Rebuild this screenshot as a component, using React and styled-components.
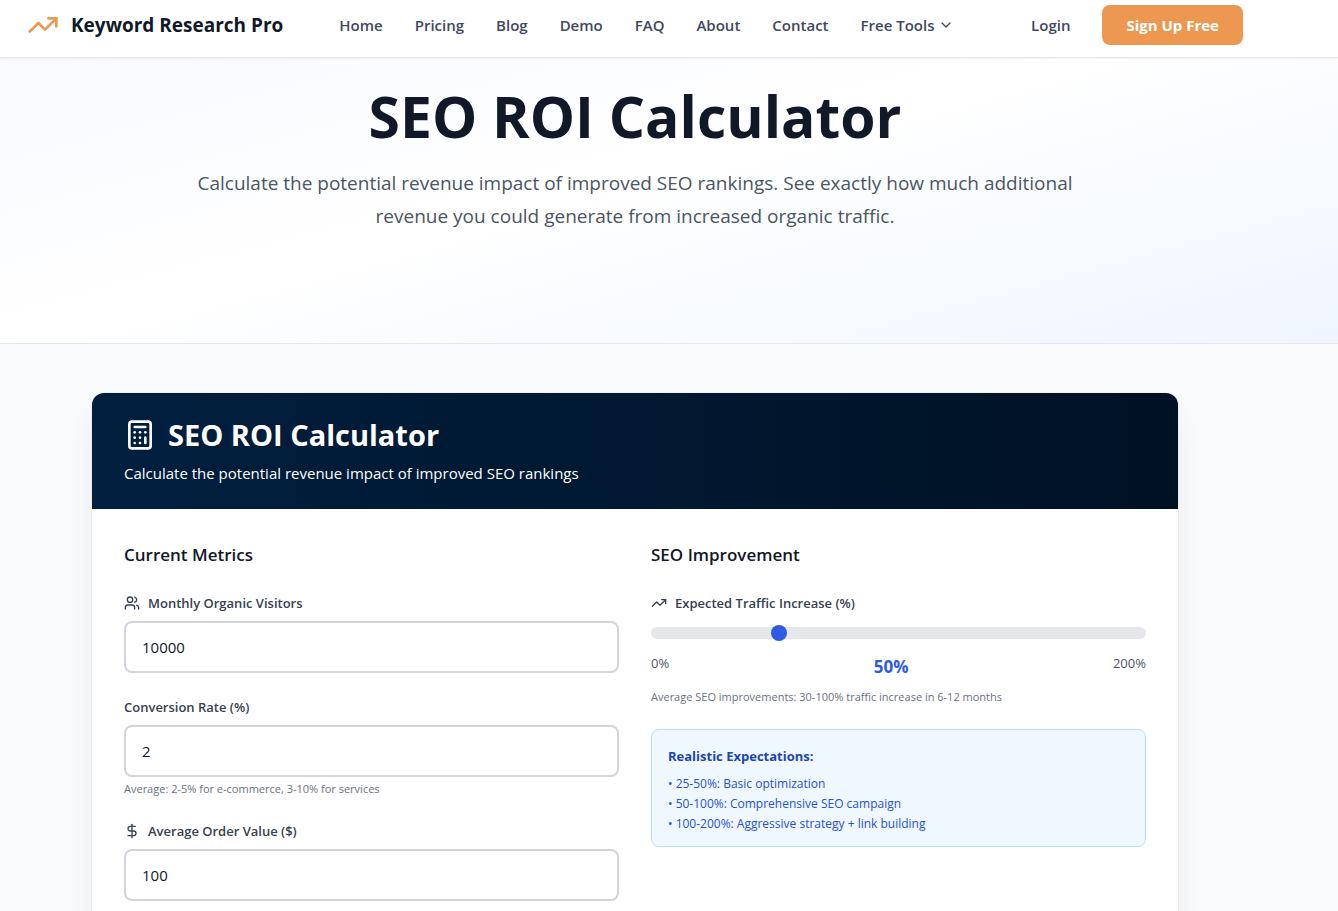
import React, { useState } from "react";
import styled, { createGlobalStyle } from "styled-components";
import {
    Calculator,
    ChevronDown,
    DollarSign,
    TrendingUp,
    Users,
} from "lucide-react";

const navLinks = ["Home", "Pricing", "Blog", "Demo", "FAQ", "About", "Contact"];

const App = () => {
    const [visitors, setVisitors] = useState("10000");
    const [rate, setRate] = useState("2");
    const [orderValue, setOrderValue] = useState("100");
    const [increase, setIncrease] = useState(50);

    return (
        <>
            <GlobalStyle />
            <Header>
                <Brand href="#home">
                    <TrendingUp size={32} color="#ed9850" />
                    Keyword Research Pro
                </Brand>
                <Nav>
                    {navLinks.map((name) => (
                        <NavLink key={name} href={`#${name.toLowerCase()}`}>
                            {name}
                        </NavLink>
                    ))}
                    <MenuButton type="button">
                        Free Tools
                        <ChevronDown size={16} />
                    </MenuButton>
                </Nav>
                <Account>
                    <NavLink href="#login">Login</NavLink>
                    <SignUp type="button">Sign Up Free</SignUp>
                </Account>
            </Header>
            <Hero>
                <HeroTitle>SEO ROI Calculator</HeroTitle>
                <HeroText>
                    Calculate the potential revenue impact of improved SEO
                    rankings. See exactly how much additional revenue you could
                    generate from increased organic traffic.
                </HeroText>
            </Hero>
            <Main>
                <Card>
                    <CardHeader>
                        <CardTitle>
                            <Calculator size={32} />
                            SEO ROI Calculator
                        </CardTitle>
                        <CardText>
                            Calculate the potential revenue impact of improved
                            SEO rankings
                        </CardText>
                    </CardHeader>
                    <CardBody>
                        <Column>
                            <SectionTitle>Current Metrics</SectionTitle>
                            <Field>
                                <Label htmlFor="visitors">
                                    <Users size={16} />
                                    Monthly Organic Visitors
                                </Label>
                                <Input
                                    id="visitors"
                                    value={visitors}
                                    onChange={(e) => setVisitors(e.target.value)}
                                />
                            </Field>
                            <Field>
                                <Label htmlFor="rate">Conversion Rate (%)</Label>
                                <Input
                                    id="rate"
                                    value={rate}
                                    onChange={(e) => setRate(e.target.value)}
                                />
                                <Hint>
                                    Average: 2-5% for e-commerce, 3-10% for
                                    services
                                </Hint>
                            </Field>
                            <Field>
                                <Label htmlFor="order">
                                    <DollarSign size={16} />
                                    Average Order Value ($)
                                </Label>
                                <Input
                                    id="order"
                                    value={orderValue}
                                    onChange={(e) =>
                                        setOrderValue(e.target.value)
                                    }
                                />
                            </Field>
                        </Column>
                        <Column>
                            <SectionTitle>SEO Improvement</SectionTitle>
                            <Field>
                                <Label htmlFor="increase">
                                    <TrendingUp size={16} />
                                    Expected Traffic Increase (%)
                                </Label>
                                <Slider
                                    id="increase"
                                    type="range"
                                    min="0"
                                    max="200"
                                    value={increase}
                                    onChange={(e) =>
                                        setIncrease(Number(e.target.value))
                                    }
                                />
                                <Scale>
                                    <span>0%</span>
                                    <Current>{increase}%</Current>
                                    <span>200%</span>
                                </Scale>
                                <Hint>
                                    Average SEO improvements: 30-100% traffic
                                    increase in 6-12 months
                                </Hint>
                            </Field>
                            <Notice>
                                <NoticeTitle>Realistic Expectations:</NoticeTitle>
                                <NoticeList>
                                    <li>• 25-50%: Basic optimization</li>
                                    <li>• 50-100%: Comprehensive SEO campaign</li>
                                    <li>
                                        • 100-200%: Aggressive strategy + link
                                        building
                                    </li>
                                </NoticeList>
                            </Notice>
                        </Column>
                    </CardBody>
                </Card>
            </Main>
        </>
    );
};

const GlobalStyle = createGlobalStyle`
    * {
        box-sizing: border-box;
    }

    body {
        margin: 0;
        background: #f9fafb;
        color: #111827;
        font-family: "Open Sans", "Noto Sans", sans-serif;
        font-size: 15px;
        line-height: 24px;
    }

    html {
        scrollbar-width: none;
    }

    h1, h2, h3, h4, p, ul {
        margin: 0;
        padding: 0;
    }

    button, input {
        font: inherit;
    }
`;

const Header = styled.header`
    position: relative;
    display: flex;
    align-items: center;
    padding: 5px 95px 12px 27px;
    background: #fff;
    border-bottom: 1px solid #e5e7eb;
    box-shadow: 0 1px 2px rgba(0, 0, 0, 0.05);
    white-space: nowrap;
`;

const Brand = styled.a`
    display: flex;
    align-items: center;
    gap: 12px;
    color: #111827;
    font-size: 19px;
    font-weight: 700;
    text-decoration: none;
`;

const Nav = styled.nav`
    display: flex;
    align-items: center;
    gap: 32px;
    margin-left: 56px;
`;

const NavLink = styled.a`
    color: #414860;
    font-weight: 600;
    text-decoration: none;
`;

const MenuButton = styled.button`
    display: flex;
    align-items: center;
    gap: 4px;
    padding: 0;
    border: 0;
    background: none;
    color: #414860;
    font-weight: 600;
`;

const Account = styled.div`
    display: flex;
    align-items: center;
    gap: 32px;
    margin-left: auto;
`;

const SignUp = styled.button`
    padding: 8px 24px;
    border: 0;
    border-radius: 8px;
    background: #ed9850;
    color: #fff;
    font-weight: 700;
`;

const Hero = styled.section`
    padding: 28px 68px 110px 0;
    background: linear-gradient(165deg, #f8faff 0%, #fff 45%, #eff5ff 100%);
    border-bottom: 1px solid #e5e7eb;
    text-align: center;
`;

const HeroTitle = styled.h1`
    font-size: 57px;
    font-weight: 700;
    line-height: 60px;
`;

const HeroText = styled.p`
    max-width: 896px;
    margin: 21px auto 0;
    color: #4b5563;
    font-size: 19px;
    line-height: 33px;
`;

const Main = styled.main`
    padding: 49px 160px 48px 92px;
`;

const Card = styled.section`
    border-radius: 12px;
    background: #fff;
    box-shadow: 0 0 2px rgba(0, 0, 0, 0.12), 0 20px 25px rgba(0, 0, 0, 0.06);
    overflow: hidden;
`;

const CardHeader = styled.div`
    padding: 24px 32px;
    background: linear-gradient(90deg, #001f3f 0%, #001123 100%);
    color: #fff;
`;

const CardTitle = styled.h2`
    display: flex;
    align-items: center;
    gap: 12px;
    font-size: 29px;
    font-weight: 700;
    line-height: 36px;
`;

const CardText = styled.p`
    margin-top: 8px;
`;

const CardBody = styled.div`
    display: grid;
    grid-template-columns: 1fr 1fr;
    gap: 32px;
    padding: 32px;
`;

const Column = styled.div`
    display: flex;
    flex-direction: column;
    gap: 24px;
`;

const SectionTitle = styled.h3`
    font-size: 17px;
    font-weight: 600;
    line-height: 28px;
`;

const Field = styled.div`
    display: flex;
    flex-direction: column;
`;

const Label = styled.label`
    display: flex;
    align-items: center;
    gap: 8px;
    margin-bottom: 8px;
    color: #374151;
    font-size: 13px;
    font-weight: 600;
    line-height: 20px;
`;

const Input = styled.input`
    width: 100%;
    padding: 12px 16px;
    height: 52px;
    border: 2px solid #d1d5db;
    border-radius: 8px;
    background: #fff;
    color: #111827;
`;

const Hint = styled.p`
    margin-top: 4px;
    color: #6b7280;
    font-size: 11px;
    line-height: 16px;
`;

const Slider = styled.input`
    appearance: none;
    width: 100%;
    height: 12px;
    margin: 6px 0 14px;
    border-radius: 8px;
    background: #e5e7eb;

    &::-webkit-slider-thumb {
        appearance: none;
        width: 16px;
        height: 16px;
        border-radius: 50%;
        background: #2f5be0;
    }
`;

const Scale = styled.div`
    display: flex;
    justify-content: space-between;
    margin-bottom: 4px;
    color: #4b5563;
    font-size: 13px;
    line-height: 20px;
`;

const Current = styled.span`
    color: #2f5be0;
    font-size: 17px;
    font-weight: 700;
    line-height: 28px;
`;

const Notice = styled.div`
    padding: 16px 16px 14px;
    border: 1px solid #bae0fd;
    border-radius: 8px;
    background: #eff7ff;
`;

const NoticeTitle = styled.h4`
    margin-bottom: 10px;
    color: #1e46af;
    font-size: 13px;
    font-weight: 700;
    line-height: 20px;
`;

const NoticeList = styled.ul`
    display: flex;
    flex-direction: column;
    gap: 4px;
    color: #2850d8;
    font-size: 12px;
    line-height: 16px;
    list-style: none;
`;

export default App;
